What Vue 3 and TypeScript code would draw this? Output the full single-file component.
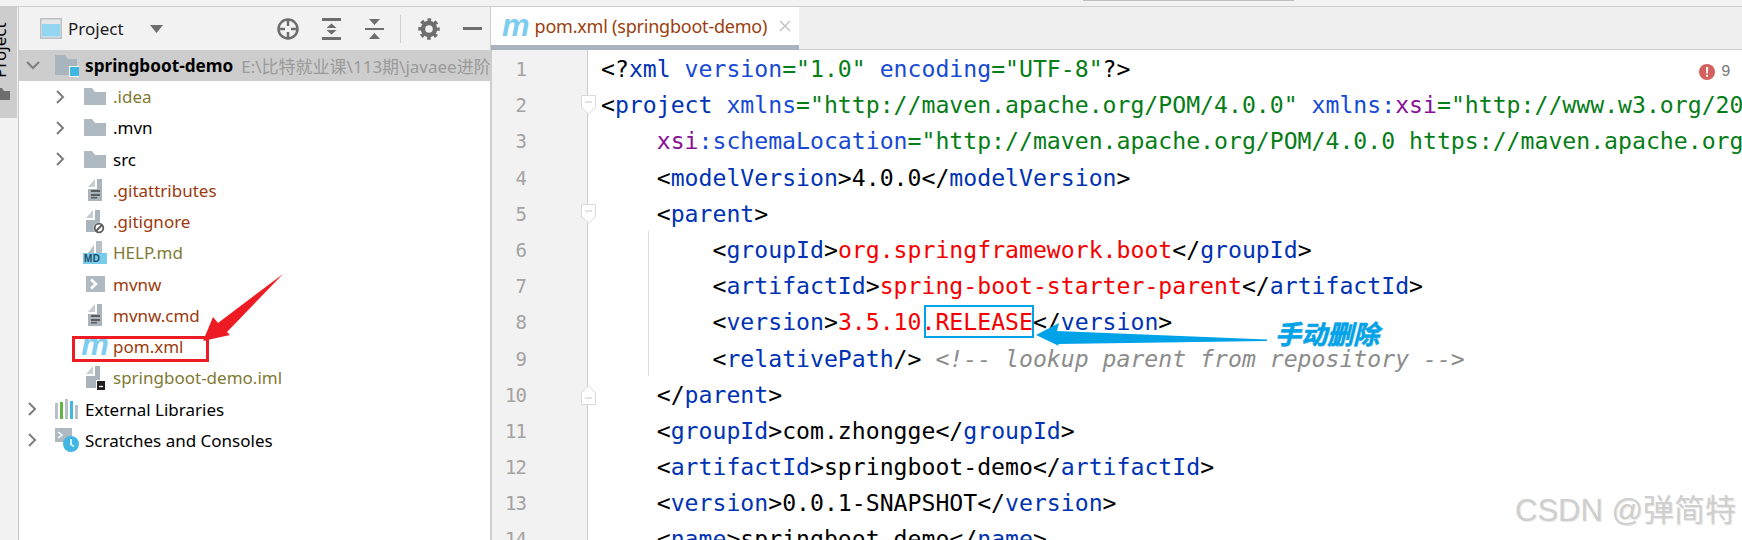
<script setup lang="ts">
type Tok = { t: string; c: string }
type Line = { n: number; indent: number; toks: Tok[]; fold?: 'open' | 'close'; guide?: boolean }

const tk = (t: string, c = 'k'): Tok => ({ t, c })
const tag = (name: string, inner: string, innerClass = 'k'): Tok[] => [
  tk('<'), tk(name, 'g'), tk('>'), tk(inner, innerClass), tk('</'), tk(name, 'g'), tk('>')
]

const lines: Line[] = [
  { n: 1, indent: 0, toks: [tk('<?'), tk('xml', 'g'), tk(' '), tk('version', 'a'), tk('="1.0"', 'v'), tk(' '), tk('encoding', 'a'), tk('="UTF-8"', 'v'), tk('?>')] },
  { n: 2, indent: 0, fold: 'open', toks: [tk('<'), tk('project', 'g'), tk(' '), tk('xmlns', 'a'), tk('="http://maven.apache.org/POM/4.0.0"', 'v'), tk(' '), tk('xmlns:', 'a'), tk('xsi', 'p'), tk('="http://www.w3.org/20', 'v')] },
  { n: 3, indent: 4, toks: [tk('xsi', 'p'), tk(':schemaLocation', 'a'), tk('="http://maven.apache.org/POM/4.0.0 https://maven.apache.org', 'v')] },
  { n: 4, indent: 4, toks: tag('modelVersion', '4.0.0') },
  { n: 5, indent: 4, fold: 'open', toks: [tk('<'), tk('parent', 'g'), tk('>')] },
  { n: 6, indent: 8, guide: true, toks: tag('groupId', 'org.springframework.boot', 'r') },
  { n: 7, indent: 8, guide: true, toks: tag('artifactId', 'spring-boot-starter-parent', 'r') },
  { n: 8, indent: 8, guide: true, toks: tag('version', '3.5.10.RELEASE', 'r') },
  { n: 9, indent: 8, guide: true, toks: [tk('<'), tk('relativePath', 'g'), tk('/> '), tk('<!-- lookup parent from repository -->', 'c')] },
  { n: 10, indent: 4, fold: 'close', toks: [tk('</'), tk('parent', 'g'), tk('>')] },
  { n: 11, indent: 4, toks: tag('groupId', 'com.zhongge') },
  { n: 12, indent: 4, toks: tag('artifactId', 'springboot-demo') },
  { n: 13, indent: 4, toks: tag('version', '0.0.1-SNAPSHOT') },
  { n: 14, indent: 4, toks: tag('name', 'springboot-demo') }
]

type Row = { name: string; kind: string; color: string; arrow?: boolean; depth: number }
const rows: Row[] = [
  { name: '.idea', kind: 'folder', color: 'olive', arrow: true, depth: 1 },
  { name: '.mvn', kind: 'folder', color: 'plain', arrow: true, depth: 1 },
  { name: 'src', kind: 'folder', color: 'plain', arrow: true, depth: 1 },
  { name: '.gitattributes', kind: 'text', color: 'rust', depth: 1 },
  { name: '.gitignore', kind: 'ignore', color: 'rust', depth: 1 },
  { name: 'HELP.md', kind: 'md', color: 'olive', depth: 1 },
  { name: 'mvnw', kind: 'shell', color: 'rust', depth: 1 },
  { name: 'mvnw.cmd', kind: 'text', color: 'rust', depth: 1 },
  { name: 'pom.xml', kind: 'maven', color: 'rust', depth: 1 },
  { name: 'springboot-demo.iml', kind: 'iml', color: 'olive', depth: 1 },
  { name: 'External Libraries', kind: 'libs', color: 'plain', arrow: true, depth: 0 },
  { name: 'Scratches and Consoles', kind: 'scratch', color: 'plain', arrow: true, depth: 0 }
]
</script>

<template>
  <div class="page">
    <div class="topbar"><span class="scroll-sliver"></span></div>
    <div class="main">
      <aside class="stripe">
        <div class="tool-tab">
          <span class="tool-label">Project</span>
          <svg class="tool-icon" width="12" height="14" viewBox="0 0 12 14"><path d="M0 2h4l2 3h6v9H0z" fill="#6e6e6e" /></svg>
        </div>
      </aside>

      <section class="panel">
        <header class="panel-head">
          <svg class="win-icon" width="22" height="21" viewBox="0 0 22 21">
            <rect x="0.75" y="0.75" width="20.5" height="19.5" fill="#e6e6e6" stroke="#b9c0c6" stroke-width="1.5" />
            <rect x="2" y="6" width="18" height="12.5" fill="#94d5ef" />
          </svg>
          <span class="head-title">Project</span>
          <svg class="caret" width="13" height="8" viewBox="0 0 13 8"><path d="M0 0h13L6.500 8z" fill="#6e6e6e" /></svg>
          <svg class="head-btn locate" width="24" height="24" viewBox="0 0 24 24">
            <circle cx="12" cy="12" r="9.500" fill="none" stroke="#6e6e6e" stroke-width="2.500" />
            <path d="M12 3v6M12 15v6M3 12h6M15 12h6" stroke="#6e6e6e" stroke-width="2.500" />
          </svg>
          <svg class="head-btn expand" width="19" height="22" viewBox="0 0 19 22">
            <path d="M0 0h19v3H0zM0 19h19v3H0z" fill="#6e6e6e" />
            <path d="M9.500 5.500l5 4.500h-10zM9.500 16.500l5-4.500h-10z" fill="#6e6e6e" />
          </svg>
          <svg class="head-btn collapse" width="19" height="22" viewBox="0 0 19 22">
            <path d="M0 10h19v2H0z" fill="#6e6e6e" />
            <path d="M4 1h11L9.500 7zM4 21h11L9.500 15z" fill="#6e6e6e" />
          </svg>
          <span class="head-sep"></span>
          <svg class="head-btn gear" width="22" height="22" viewBox="0 0 22 22">
            <circle cx="11" cy="11" r="6" fill="none" stroke="#6e6e6e" stroke-width="4.500" />
            <circle cx="11" cy="11" r="9" fill="none" stroke="#6e6e6e" stroke-width="3.500" stroke-dasharray="3.600 3.470" stroke-dashoffset="1.800" />
          </svg>
          <span class="head-min"></span>
        </header>

        <div class="root-row">
          <svg class="chev" width="14" height="9" viewBox="0 0 14 9"><path d="M1 1l6 6 6-6" fill="none" stroke="#7d7d7d" stroke-width="2" /></svg>
          <span class="root-icon">
            <svg width="24" height="22" viewBox="0 0 24 22">
              <path d="M0 0h10l3 4h9v16H0z" fill="#a9b4bc" />
              <rect x="14" y="11" width="10" height="11" fill="#ffffff" />
              <rect x="15" y="12" width="9" height="9" fill="#40b6e0" />
            </svg>
          </span>
          <span class="root-name">springboot-demo</span>
          <span class="root-path">E:\比特就业课\113期\javaee进阶</span>
        </div>

        <div v-for="r in rows" :key="r.name" class="row" :class="'depth' + r.depth">
          <span class="arrow-slot">
            <svg v-if="r.arrow" width="9" height="14" viewBox="0 0 9 14"><path d="M1 1l6 6-6 6" fill="none" stroke="#7d7d7d" stroke-width="2" /></svg>
          </span>
          <span class="icon-slot">
            <svg v-if="r.kind === 'folder'" width="22" height="17" viewBox="0 0 22 17"><path d="M0 0h8l3 4h11v13H0z" fill="#afb9c1" /></svg>
            <svg v-else-if="r.kind === 'text'" width="16" height="22" viewBox="0 0 16 22">
              <path d="M1 8l7-8v8z" fill="#c5ccd2" /><path d="M10 0h5v22H1V10h9z" fill="#a9b4bc" />
              <path d="M4 11h9v2H4zM4 15h9v2H4zM4 18h6v1.500H4z" fill="#5c5c5c" />
            </svg>
            <svg v-else-if="r.kind === 'ignore'" width="20" height="24" viewBox="0 0 20 24">
              <path d="M1 8l7-8v8z" fill="#c5ccd2" /><path d="M10 0h5v22H1V10h9z" fill="#a9b4bc" />
              <circle cx="14" cy="18" r="5.500" fill="#fff" />
              <circle cx="14" cy="18" r="4.300" fill="none" stroke="#5c5c5c" stroke-width="1.800" />
              <path d="M11 21l6-6" stroke="#5c5c5c" stroke-width="1.800" />
            </svg>
            <span v-else-if="r.kind === 'md'" class="md-icon">
              <svg width="16" height="12" viewBox="0 0 16 12"><path d="M1 12l6-8v8zM9 0h6v12H9z" fill="#b7c0c7" /></svg>
              <b class="md-text">MD</b>
            </span>
            <svg v-else-if="r.kind === 'shell'" width="19" height="16" viewBox="0 0 19 16">
              <rect width="19" height="16" fill="#afb9c1" />
              <path d="M5 3.500l5 4.500-5 4.500" fill="none" stroke="#fff" stroke-width="2.500" />
            </svg>
            <i v-else-if="r.kind === 'maven'" class="maven-m">m</i>
            <svg v-else-if="r.kind === 'iml'" width="20" height="24" viewBox="0 0 20 24">
              <path d="M1 8l7-8v8z" fill="#c5ccd2" /><path d="M10 0h5v22H1V10h9z" fill="#a9b4bc" />
              <rect x="11" y="14" width="9" height="10" fill="#fff" />
              <rect x="12" y="15" width="8" height="9" fill="#231f20" />
              <path d="M14 20.500h4" stroke="#fff" stroke-width="1.300" />
            </svg>
            <svg v-else-if="r.kind === 'libs'" width="24" height="20" viewBox="0 0 24 20">
              <rect x="0" y="4" width="3" height="16" fill="#b7c0c7" />
              <rect x="5" y="3" width="3" height="17" fill="#62b543" />
              <rect x="10" y="0" width="3" height="20" fill="#b7c0c7" />
              <rect x="15" y="2" width="3" height="18" fill="#40b6e0" />
              <rect x="20" y="6" width="3" height="14" fill="#b7c0c7" />
            </svg>
            <svg v-else-if="r.kind === 'scratch'" width="24" height="24" viewBox="0 0 24 24">
              <path d="M0 0h17v14H0z" fill="#afb9c1" />
              <path d="M3 4l4 3-4 3" fill="none" stroke="#fff" stroke-width="1.500" />
              <circle cx="16" cy="16" r="8" fill="#40b6e0" />
              <path d="M16 11v5.500l3 2" fill="none" stroke="#fff" stroke-width="1.500" />
            </svg>
          </span>
          <span class="row-name" :class="r.color">{{ r.name }}</span>
        </div>
      </section>

      <section class="editor">
        <div class="tabbar">
          <div class="tab">
            <i class="maven-m tab-m">m</i>
            <span class="tab-title">pom.xml (springboot-demo)</span>
            <svg class="tab-x" width="12" height="12" viewBox="0 0 12 12"><path d="M1 1l10 10M11 1L1 11" stroke="#c4c4c4" stroke-width="1.500" /></svg>
          </div>
        </div>
        <div class="code">
          <div class="err"><svg width="16" height="16" viewBox="0 0 16 16"><circle cx="8" cy="8" r="8" fill="#d2605e" /><path d="M7 3h2.200l-.3 6.500H7.300zM7.100 10.800h2v2h-2z" fill="#fff" /></svg><span>9</span></div>
          <div v-for="l in lines" :key="l.n" class="line">
            <div class="gutter">
              <span class="num">{{ l.n }}</span>
              <svg v-if="l.fold === 'open'" class="fold" width="15" height="20" viewBox="0 0 15 20">
                <path d="M.500 .500h14v12l-7 6.500-7-6.500z" fill="#fff" stroke="#d9d9d9" /><path d="M4 7h7" stroke="#c8c8c8" />
              </svg>
              <svg v-if="l.fold === 'close'" class="fold" width="15" height="20" viewBox="0 0 15 20">
                <path d="M.500 19.500h14v-12L7.500 1 .500 7.500z" fill="#fff" stroke="#d9d9d9" /><path d="M4 13h7" stroke="#c8c8c8" />
              </svg>
            </div>
            <div class="text" :class="{ guided: l.guide }">
              <span class="pad">{{ ' '.repeat(l.indent) }}</span><span v-for="(t, i) in l.toks" :key="i" :class="t.c">{{ t.t }}</span>
            </div>
          </div>
        </div>
      </section>
    </div>

    <div class="red-box"></div>
    <div class="blue-box"></div>
    <svg class="annot" width="1742" height="540" viewBox="0 0 1742 540">
      <polygon points="283,274 227,332 230,335 203,341 213,317 218,323" fill="#ed1c24" />
      <polygon points="1036,335 1059,323 1057,331 1267,339.500 1267,341 1058,344 1059,346" fill="#00a2e8" />
    </svg>
    <span class="note">手动删除</span>
    <span class="mark">CSDN @弹简特</span>
  </div>
</template>

<style>
html, body { margin: 0; background: #fff; }
</style>

<style scoped>
.page {
  position: relative;
  width: 1742px;
  height: 540px;
  overflow: hidden;
  display: flex;
  flex-direction: column;
  background: #fff;
  font-family: "Noto Sans", "Noto Sans CJK SC", sans-serif;
  color: #000;
}
.topbar {
  position: relative;
  height: 6px;
  flex: none;
  background: #f2f2f2;
  border-bottom: 1px solid #cdcdcd;
}
.scroll-sliver {
  position: absolute;
  left: 1083px;
  top: 0;
  width: 211px;
  height: 1px;
  background: #bdbdbd;
}
.main { flex: 1; display: flex; min-height: 0; }

.stripe { width: 18px; flex: none; background: #f2f2f2; }
.tool-tab {
  width: 17px;
  height: 111px;
  background: #cdcdcd;
  overflow: hidden;
  display: flex;
  flex-direction: column;
  box-sizing: border-box;
  padding-top: 10px;
}
.tool-label {
  writing-mode: vertical-rl;
  transform: rotate(180deg);
  font-size: 17px;
  line-height: 20px;
  width: 20px;
  margin-left: -10px;
  height: 61px;
  text-align: left;
}
.tool-icon { margin: 8px 0 0 -2px; flex: none; }

.panel {
  width: 473px;
  flex: none;
  box-sizing: border-box;
  border-left: 1px solid #c9c9c9;
  border-right: 1px solid #cdcdcd;
  overflow: hidden;
}
.panel-head {
  height: 43px;
  background: #f2f2f2;
  display: flex;
  align-items: center;
  padding-left: 21px;
}
.win-icon { flex: none; }
.head-title { font-size: 17px; margin-left: 6px; width: 61px; color: #1c1c1c; }
.caret { flex: none; margin-left: 21px; }
.head-btn { flex: none; }
.locate { margin-left: 113px; }
.expand { margin-left: 22px; }
.collapse { margin-left: 24px; }
.head-sep { width: 1px; height: 28px; background: #cfcfcf; margin-left: 16px; flex: none; }
.gear { margin-left: 17px; }
.head-min { width: 19px; height: 3px; background: #6e6e6e; margin-left: 23px; flex: none; }

.root-row {
  height: 31px;
  background: #cdcdcd;
  display: flex;
  align-items: center;
  white-space: nowrap;
  overflow: hidden;
  position: relative;
}
.chev { margin-left: 7px; flex: none; }
.root-icon { margin-left: 15px; display: flex; flex: none; }
.root-name { margin-left: 6px; font-size: 17.200px; font-weight: 700; color: #000; }
.root-path { margin-left: 8px; font-size: 17px; color: #9a9a9a; }

.row {
  height: 31.250px;
  display: flex;
  align-items: center;
  white-space: nowrap;
}
.arrow-slot { width: 10px; display: flex; justify-content: flex-start; flex: none; }
.depth1 .arrow-slot { margin-left: 37px; }
.depth0 .arrow-slot { margin-left: 9px; }
.icon-slot { width: 28px; margin-left: 15px; height: 31px; display: flex; align-items: center; justify-content: center; flex: none; }
.depth0 .icon-slot { width: 24px; margin-left: 17px; }
.row-name { font-size: 17px; }
.depth1 .row-name { margin-left: 4px; }
.depth0 .row-name { margin-left: 6px; }
.plain { color: #000; }
.rust { color: #9b3a0c; }
.olive { color: #7f7a32; }

.md-icon { position: relative; display: flex; flex-direction: column; align-items: center; width: 24px; }
.md-text {
  width: 24px;
  height: 11px;
  background: #79cbea;
  color: #1f4e6a;
  font: 700 10px/11px "Liberation Sans", sans-serif;
  text-indent: 1px;
  letter-spacing: 0.5px;
}
.maven-m {
  font: italic 700 31px/24px "Liberation Sans", sans-serif;
  color: #7ccdee;
  display: block;
  height: 24px;
  margin-top: -4px;
}
.tab-m { margin-top: 0; }

.editor { flex: 1; min-width: 0; display: flex; flex-direction: column; }
.tabbar {
  height: 43px;
  flex: none;
  background: #f0f0f0;
  border-bottom: 1px solid #cdcdcd;
  box-sizing: border-box;
  display: flex;
}
.tab {
  width: 308px;
  height: 43px;
  box-sizing: border-box;
  background: #fff;
  border-bottom: 5px solid #a9b3bf;
  padding-left: 11px;
  display: flex;
  align-items: center;
}
.tab-title {
  font-size: 18px;
  color: #9b3e0c;
  margin-left: 5px;
  letter-spacing: -0.22px;
  white-space: nowrap;
}
.tab-x { margin-left: 12px; flex: none; }

.code { position: relative; flex: 1; overflow: hidden; }
.line { display: flex; height: 36.200px; }
.gutter {
  width: 97px;
  flex: none;
  box-sizing: border-box;
  background: #f2f2f2;
  border-left: 1px solid #cdcdcd;
  border-right: 1px solid #cdcdcd;
  position: relative;
  text-align: right;
  padding: 1px 61px 0 0;
  font: 19px/36px "DejaVu Sans Mono", monospace;
  letter-spacing: -1px;
  color: #a3a3a3;
}
.fold { position: absolute; left: 89px; top: 9px; }
.text {
  position: relative;
  flex: 1;
  box-sizing: border-box;
  padding: 1px 0 0 13px;
  white-space: pre;
  font: 23.150px/36px "DejaVu Sans Mono", monospace;
}
.guided::before {
  content: "";
  position: absolute;
  left: 60px;
  top: 0;
  bottom: 0;
  width: 1px;
  background: #dcdcdc;
}
.k { color: #000; }
.g { color: #0033b3; }
.a { color: #174ad4; }
.v { color: #067d17; }
.p { color: #871094; }
.r { color: #f50000; }
.c { color: #8c8c8c; font-style: italic; }

.err {
  position: absolute;
  left: 1208px;
  top: 14px;
  display: flex;
  align-items: center;
  gap: 6px;
  color: #7a7a7a;
  font: 16px/16px "Liberation Mono", monospace;
  z-index: 1;
}

.red-box {
  position: absolute;
  left: 72px;
  top: 336px;
  width: 137px;
  height: 26px;
  box-sizing: border-box;
  border: 3px solid #ed1c24;
}
.blue-box {
  position: absolute;
  left: 924px;
  top: 305px;
  width: 110px;
  height: 33px;
  box-sizing: border-box;
  border: 2.500px solid #00a2e8;
}
.annot { position: absolute; left: 0; top: 0; pointer-events: none; }
.note {
  position: absolute;
  left: 1275px;
  top: 317px;
  font: italic 700 26px/32px "Noto Sans CJK SC", sans-serif;
  color: #00a2e8;
  -webkit-text-stroke: 0.5px #00a2e8;
  text-shadow: 1px 1px 0 #e8e8e8, -1px -1px 0 #fff, 1px -1px 0 #fff, -1px 1px 0 #fff;
  white-space: nowrap;
}
.mark {
  position: absolute;
  left: 1515px;
  top: 491px;
  font: 31px/40px "Liberation Sans", "Noto Sans CJK SC", sans-serif;
  color: #cfcfcf;
  text-shadow: 1px 1px 1px #e4e4e4;
  white-space: nowrap;
}
</style>
